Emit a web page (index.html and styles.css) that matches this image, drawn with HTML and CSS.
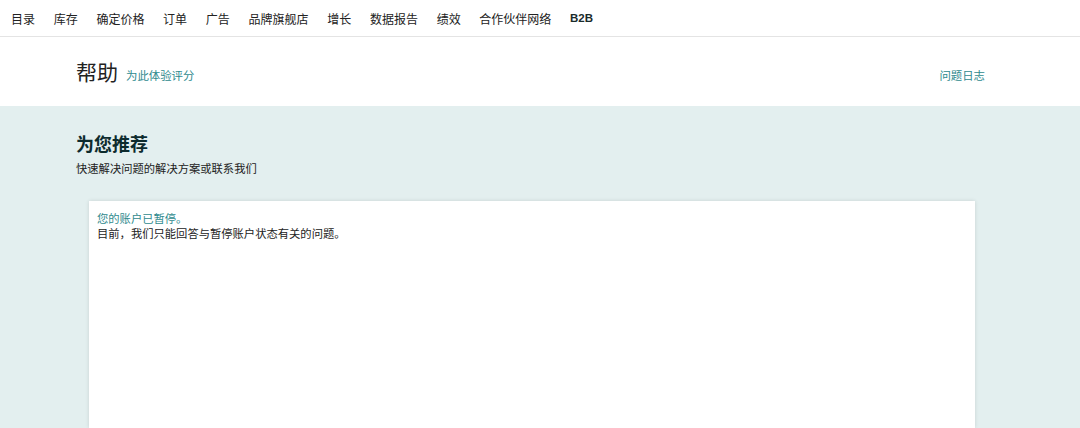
FILE: index.html
```html
<!DOCTYPE html>
<html lang="zh-CN">
<head>
    <meta charset="UTF-8">
    <meta name="viewport" content="width=device-width, initial-scale=1.0">
    <title>帮助</title>
    <link rel="stylesheet" href="styles.css">
</head>
<body>
    <nav class="topnav">
        <a href="#">目录</a>
        <a href="#">库存</a>
        <a href="#">确定价格</a>
        <a href="#">订单</a>
        <a href="#">广告</a>
        <a href="#">品牌旗舰店</a>
        <a href="#">增长</a>
        <a href="#">数据报告</a>
        <a href="#">绩效</a>
        <a href="#">合作伙伴网络</a>
        <a href="#" class="latin">B2B</a>
    </nav>

    <header class="help-header">
        <div class="help-left">
            <h1>帮助</h1>
            <a href="#" class="link">为此体验评分</a>
        </div>
        <a href="#" class="link">问题日志</a>
    </header>

    <main class="recommend">
        <h2>为您推荐</h2>
        <p class="sub">快速解决问题的解决方案或联系我们</p>
        <div class="card">
            <div class="notice-title">您的账户已暂停。</div>
            <div class="notice-text">目前，我们只能回答与暂停账户状态有关的问题。</div>
        </div>
    </main>
</body>
</html>
```

FILE: styles.css
```css
html, body {
    height: 100%;
}

body {
    margin: 0;
    display: flex;
    flex-direction: column;
    font-family: "Noto Sans CJK SC", "Liberation Sans", sans-serif;
    color: #0f1111;
    background: #e3efef;
    overflow: hidden;
}

a {
    text-decoration: none;
}

.topnav {
    display: flex;
    gap: 18.7px;
    height: 36px;
    align-items: center;
    padding-left: 11px;
    background: #fff;
    border-bottom: 1px solid #e4e4e4;
}

.topnav a {
    font-size: 12px;
    color: #222;
}

.topnav .latin {
    font-family: "Liberation Sans", sans-serif;
    font-weight: bold;
    font-size: 11.5px;
    color: #1a2b2b;
}

.help-header {
    display: flex;
    justify-content: space-between;
    align-items: baseline;
    height: 69px;
    box-sizing: border-box;
    padding: 19px 95px 0 76px;
    background: #fff;
}

.help-left {
    display: flex;
    align-items: baseline;
    gap: 8px;
}

.help-header h1 {
    margin: 0;
    font-size: 21px;
    font-weight: normal;
    color: #222;
}

.link {
    font-size: 11.4px;
    color: #2f8a8e;
}

.recommend {
    flex: 1;
    display: flex;
    flex-direction: column;
    padding: 24px 105px 0 76px;
}

.recommend h2 {
    margin: 0;
    font-size: 18px;
    font-weight: bold;
    color: #0d2b2e;
    line-height: 26px;
}

.sub {
    margin: 4px 0 0;
    font-size: 11.3px;
    color: #222;
}

.card {
    flex: 1;
    margin: 25px 0 0 13px;
    padding: 10px 8px;
    background: #fff;
    box-shadow: 0 0 4px rgba(0, 0, 0, 0.12);
    font-size: 11.3px;
    line-height: 15px;
}

.notice-title {
    color: #2f8a8e;
}

.notice-text {
    color: #222;
}
```
